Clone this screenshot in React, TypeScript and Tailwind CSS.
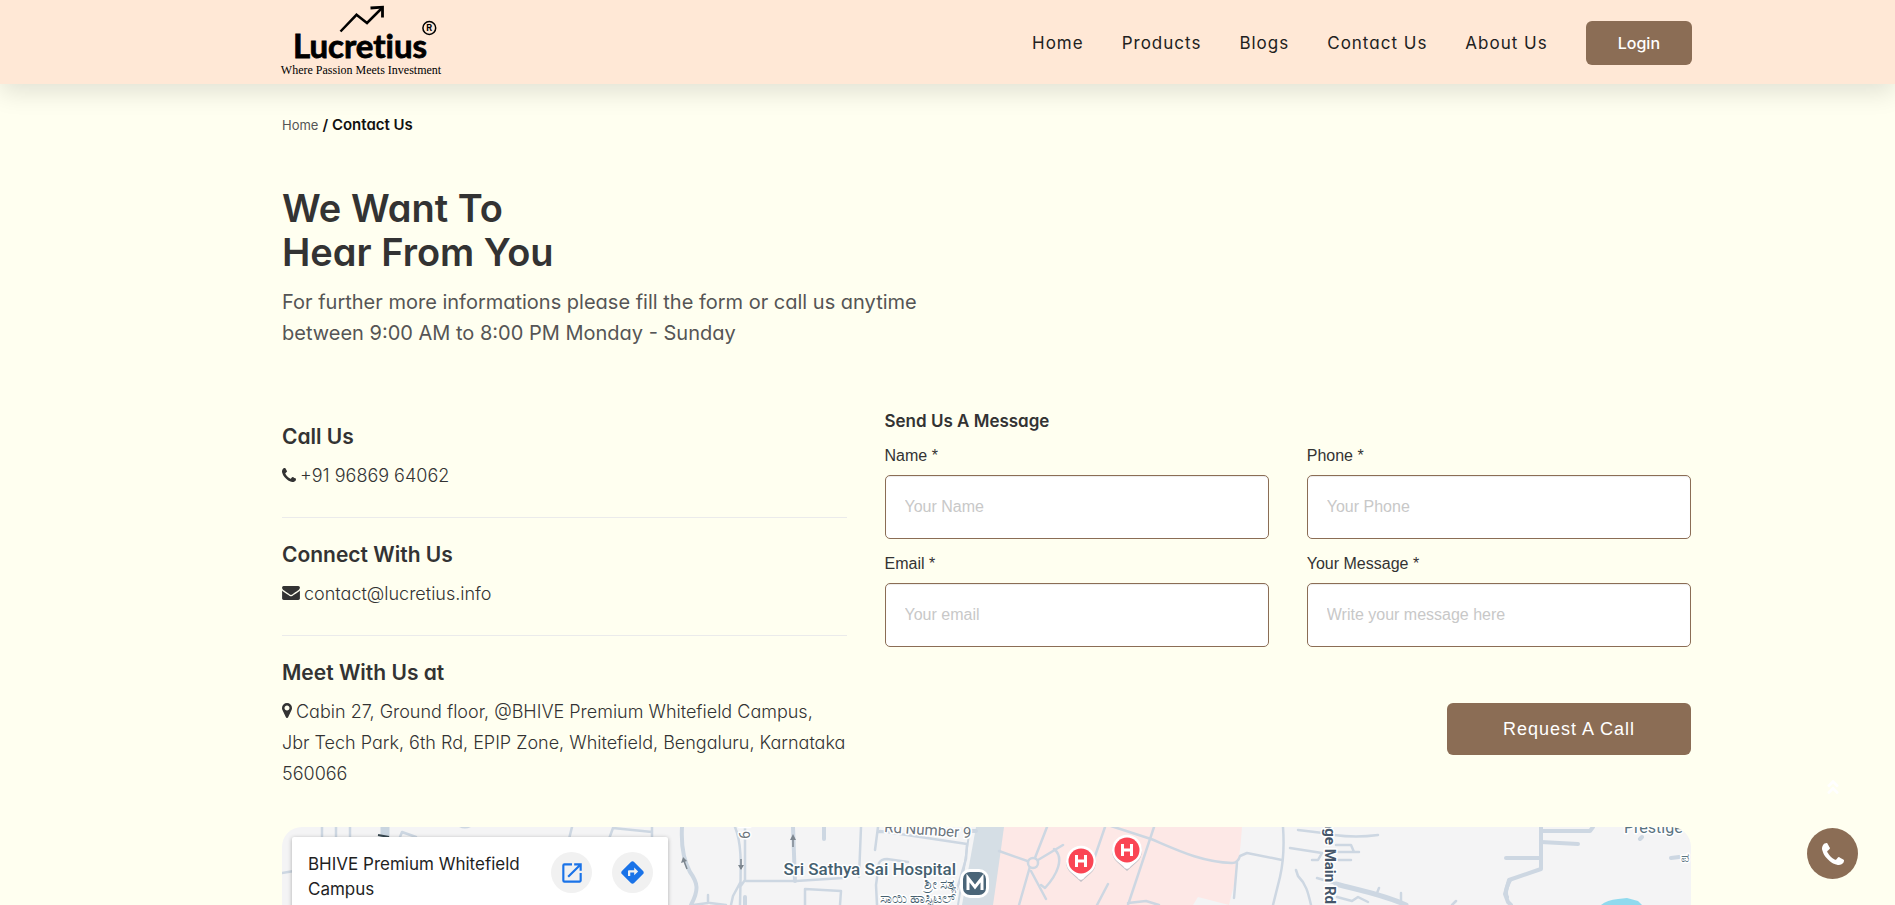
import { useState } from "react";
import { FaAngleDoubleUp } from "react-icons/fa";
import { MdDirections, MdOpenInNew } from "react-icons/md";

const navLinks = ["Home", "Products", "Blogs", "Contact Us", "About Us"];

const fields = [
    { name: "name", label: "Name *", placeholder: "Your Name", type: "text" },
    { name: "phone", label: "Phone *", placeholder: "Your Phone", type: "tel" },
    { name: "email", label: "Email *", placeholder: "Your email", type: "email" },
    { name: "message", label: "Your Message *", placeholder: "Write your message here", type: "text" },
];

function PhoneIcon({ className }: { className?: string }) {
    return (
        <svg viewBox="0 0 1408 1408" fill="currentColor" className={className} aria-hidden="true">
            <path d="M1408 1112q0 27-10 70.5t-21 68.5q-21 50-122 106-94 51-186 51-27 0-53-3.5t-57.5-12.5-47-14.5-55.5-20.5-49-18q-98-35-175-83-127-79-264-216t-216-264q-48-77-83-175-3-9-18-49t-20.5-55.5-14.5-47-12.5-57.5-3.5-53q0-92 51-186 56-101 106-122 25-11 68.5-21t70.5-10q14 0 21 3 18 6 53 76 11 19 30 54t35 63.5 31 53.5q3 4 17.5 25t21.5 35.5 7 28.5q0 20-28.5 50t-62 55-62 53-28.5 46q0 9 5 22.5t8.5 20.5 14 24 11.5 19q76 137 174 235t235 174q2 1 19 11.5t24 14 20.5 8.5 22.5 5q18 0 46-28.5t53-62 55-62 50-28.5q14 0 28.5 7t35.5 21.5 25 17.5q25 15 53.5 31t63.5 35 54 30q70 35 76 53 3 7 3 21z" />
        </svg>
    );
}

function EnvelopeIcon({ className }: { className?: string }) {
    return (
        <svg viewBox="0 256 1792 1408" fill="currentColor" className={className} aria-hidden="true">
            <path d="M1792 710v794q0 66-47 113t-113 47h-1472q-66 0-113-47t-47-113v-794q44 49 101 87 362 246 497 345 57 42 92.5 65.5t94.5 48 110 24.5h2q51 0 110-24.5t94.5-48 92.5-65.5q170-123 498-345 57-39 100-87zm0-294q0 79-49 151t-122 123q-376 261-468 325-10 7-42.5 31t-54 38.5-52 32.5-57.5 27-50 9h-2q-23 0-50-9t-57.5-27-52-32.5-54-38.5-42.5-31q-91-64-262-182.5t-205-142.5q-62-42-117-115.5t-55-136.5q0-78 41.5-130t118.5-52h1472q65 0 112.5 47t47.5 113z" />
        </svg>
    );
}

function MarkerIcon({ className }: { className?: string }) {
    return (
        <svg viewBox="0 128 1024 1536" fill="currentColor" className={className} aria-hidden="true">
            <path d="M768 640q0-106-75-181t-181-75-181 75-75 181 75 181 181 75 181-75 75-181zm256 0q0 109-33 179l-364 774q-16 33-47.5 52t-67.5 19-67.5-19-46.5-52l-365-774q-33-70-33-179 0-212 150-362t362-150 362 150 150 362z" />
        </svg>
    );
}

function Logo() {
    return (
        <svg viewBox="-2 3 164 80" className="-ml-0.5 h-20 w-41" role="img" aria-label="Lucretius">
            <g fill="none" stroke="#000">
                <path d="M59.5 31.500 L75.500 14.800 L86 23 L101 8" strokeWidth="2.500" />
                <path d="M89.500 8 L101.500 7.200 L101.500 17.500" strokeWidth="2.800" />
                <circle cx="148.300" cy="28" r="6.400" strokeWidth="1.500" />
            </g>
            <text x="148.300" y="31.200" textAnchor="middle" className="font-['Inter'] text-[9px] font-bold">R</text>
            <text x="79" y="58" textAnchor="middle" stroke="#000" strokeWidth="0.800" className="font-['Lato'] text-[33px] font-bold [font-variant-ligatures:none]">Lucretius</text>
            <text x="80" y="74" textAnchor="middle" className="font-['Liberation_Serif'] text-[12px]">Where Passion Meets Investment</text>
        </svg>
    );
}

function HospitalPin({ x, y }: { x: number; y: number }) {
    return (
        <g transform={`translate(${x} ${y})`}>
            <path d="M0 20 L-10 11 A15 15 0 1 1 10 11 Z" fill="#8e9bab" opacity="0.5" transform="translate(0 1)" />
            <path d="M0 19 Q-2 19 -4 16 L-10 11 A15 15 0 1 1 10 11 L4 16 Q2 19 0 19 Z" fill="#fff" />
            <circle r="12.500" fill="#fa4554" />
            <path d="M-4.500 -6 V6 M4.500 -6 V6 M-4.500 0 H4.500" stroke="#fff" strokeWidth="3" />
        </g>
    );
}

function MapArt() {
    return (
        <svg
            viewBox="0 0 1410 78"
            preserveAspectRatio="xMinYMin slice"
            className="absolute inset-0 h-full w-full"
            role="img"
            aria-label="Map of Whitefield"
        >
            <rect width="1410" height="78" fill="#f4f4f5" />
            <path d="M720 0 H960 Q958 38 947 78 L916 70 L911 78 H709 Z" fill="#fde8e6" />
            <path d="M694 0 H722 Q718 30 711 78 H680 Z" fill="#d5dee5" />
            <path d="M688 0 Q684 30 676 78" stroke="#cbd6e0" strokeWidth="2" fill="none" />
            <path d="M1319 78 Q1325 73 1336 72 L1345 71 L1356 74 L1360 78 Z" fill="#90daee" />

            <g fill="none" stroke="#cdd7e2" strokeWidth="2.500" strokeLinecap="round" strokeLinejoin="round">
                {/* west side, mostly behind the place card */}
                <path d="M40 0 V10 M54 0 V10 M68 0 V10 M0 46 L12 44 M118 10 L120 5 L134 10 M290 0 L287 12 M370 0 V12 M370 5 L331 1 L327 12" />
                <path d="M103 0 V10" stroke="#c9d5e0" strokeWidth="9" strokeLinecap="butt" />
                <path d="M175 -3 Q182 3 190 -2" />
                <path d="M400 0 C399 18 402 34 408 45 C416 56 417 63 409 78" strokeWidth="4" />
                <path d="M453 0 C460 17 459 36 458 78 M463 0 L463 53 L458 60" />
                <path d="M464 54 L514 54 L561 51 M458 56 L451 69 L449 78 M426 68 V76 L411 78 M428 76 L444 78" />
                <path d="M511 0 L513 54 M542 0 V12" strokeWidth="4" />
                <path d="M579 0 L577 50 M596 0 L593 23 M598 4 L685 17 L684 32 L675 62 M597 5 H610" />
                <path d="M595 78 L594 58 L597 36 Q599 32 605 32 L626 35 M523 78 V62 L559 64 L558 78" />
                <path d="M463 70 V78 M682 4 H694" strokeWidth="4" />
                {/* hospital grounds */}
                <path d="M717 24 L751 36 L765 0 M751 36 L781 18 M749 36 L737 78 M749 44 L764 72" />
                <circle cx="751" cy="36" r="5" fill="#fde8e6" />
                <path d="M772 22 C783 31 775 48 763 61 L759 58 M823 0 L812 32 M872 0 L846 78 M826 57 L815 78 M846 76 L864 74 L877 78" />
                <path d="M829 -1 L869 12 C895 23 919 35 950 36 Q956 36 958 29 L965 26 L1000 33 M955 36 L952 71" />
                {/* main road side streets */}
                <path d="M1001 0 Q1003 28 998 50 L991 78 M1014 43 L1016 49 C1024 57 1026 65 1029 78" />
                <path d="M1016 3 L1041 6 M1008 21 L1040 26 L1036 33 H1030 M1052 8 Q1074 11 1096 8 M1054 18 H1069 L1072 25 H1077 M1053 25 H1072 M1055 33 H1069" />
                <path d="M1035 51 L1055 57 M1055 70 L1070 74 L1076 70 L1086 75 M1095 66 L1097 61 M1119 75 V66 M1170 78 L1174 74" />
                <path d="M1054 57 C1080 64 1100 67 1124 78" strokeWidth="5" />
                {/* Prestige lanes */}
                <path d="M1259 0 V42 L1227 53 L1223 67 L1226 75 L1229 78 M1224 31 H1259" strokeWidth="4" />
                <path d="M1259 4 L1308 4 L1311 0 M1259 15 L1296 17 M1360 10 L1358 12 M1389 31 L1397 30 M1228 53 Q1222 65 1225 70" strokeWidth="4" />
            </g>

            <g stroke="#7d868f" strokeWidth="1.500" fill="#7d868f">
                <path d="M402 34 L405 42 M511 20 V9 M459 32 V42" />
                <path d="M399 36 L401 30 L405 34 Z M508 13 L511 7 L514 13 Z M456 38 L459 43 L462 38 Z" stroke="none" />
            </g>
            <path d="M96 8 L107 10" stroke="#37474f" strokeWidth="2" />

            <g className="font-['Roboto']" stroke="#fff" strokeWidth="3" paintOrder="stroke" strokeLinejoin="round">
                <text x="602" y="5" transform="rotate(4 602 5)" fill="#6b747c" className="text-[15px]">Rd Number 9</text>
                <text x="457" y="-16" transform="rotate(90 457 -16)" fill="#6b747c" className="text-[14px]">Rd 9</text>
                <text x="674" y="48" textAnchor="end" fill="#45606f" className="text-[17px] font-medium">Sri Sathya Sai Hospital</text>
                <text x="674" y="62" textAnchor="end" fill="#45606f" className="text-[14px]">ಶ್ರೀ ಸತ್ಯ</text>
                <text x="674" y="76" textAnchor="end" fill="#45606f" className="text-[14px]">ಸಾಯಿ ಹಾಸ್ಪಿಟಲ್</text>
                <text x="1043" y="77" textAnchor="end" transform="rotate(90 1043 77)" fill="#45566a" className="text-[15px] font-bold">Graphite Village Main Rd</text>
                <text x="1342" y="6" fill="#5a7482" className="text-[16px]">Prestige</text>
                <text x="1399" y="35" fill="#5a7482" className="text-[13px]">ಪ</text>
            </g>

            <rect x="678" y="42" width="29" height="29" rx="10" fill="#fff" />
            <rect x="681" y="45" width="23" height="23" rx="7" fill="#4a6578" />
            <path d="M686 63 V51 L693 60 L700 51 V63" fill="none" stroke="#fff" strokeWidth="3" />
            <HospitalPin x={799} y={34} />
            <HospitalPin x={845} y={23} />
        </svg>
    );
}

export default function ContactPage() {
    const [values, setValues] = useState<Record<string, string>>({});

    return (
        <div className="flex min-h-screen flex-col bg-[#fffff0] font-['Inter',sans-serif] text-[#333] [font-feature-settings:'cv11']">
            <header className="relative z-10 flex h-21 items-center justify-between bg-[#ffe8d6] pt-0.5 pr-[203px] pl-[281px] shadow-[0_8px_24px_rgba(0,0,0,0.12)]">
                <a href="#home">
                    <Logo />
                </a>
                <nav className="flex items-center gap-[38px]">
                    {navLinks.map(link => (
                        <a key={link} href="#" className="pt-0.5 text-[17px] tracking-[1px] text-[#212121]">{link}</a>
                    ))}
                    <button className="h-11 rounded-md bg-[#8b6d55] px-8 text-base font-medium text-white">Login</button>
                </nav>
            </header>

            <main className="flex flex-1 flex-col pr-[204px] pl-[282px]">
                <div className="mt-[31px] flex items-center gap-1 text-[15px] leading-5 text-[#111]">
                    <a href="#home" className="text-[13px] text-[#555]">Home</a>
                    <span className="font-semibold">/ Contact Us</span>
                </div>

                <h1 className="mt-[51px] text-[38px] leading-11 font-semibold">
                    We Want To
                    <br />
                    Hear From You
                </h1>
                <p className="mt-[13px] text-xl leading-[31px] text-[#555]">
                    For further more informations please fill the form or call us anytime
                    <br />
                    between 9:00 AM to 8:00 PM Monday - Sunday
                </p>

                <div className="mt-[51px] grid grid-cols-[7fr_10fr] gap-[38px]">
                    <div>
                        <section className="border-b border-[#ebebeb] pt-5 pb-[26px]">
                            <h2 className="text-[21px] leading-[34px] font-semibold">Call Us</h2>
                            <p className="mt-1.5 text-lg leading-[31px] font-light">
                                <PhoneIcon className="mr-1 inline h-[14px] w-[14px] align-baseline" />
                                +91 96869 64062
                            </p>
                        </section>
                        <section className="border-b border-[#ebebeb] pt-5 pb-[26px]">
                            <h2 className="text-[21px] leading-[34px] font-semibold">Connect With Us</h2>
                            <p className="mt-1.5 text-lg leading-[31px] font-light">
                                <EnvelopeIcon className="mr-1 inline h-[14px] w-[18px] align-baseline" />
                                contact@lucretius.info
                            </p>
                        </section>
                        <section className="pt-5">
                            <h2 className="text-[21px] leading-[34px] font-semibold">Meet With Us at</h2>
                            <p className="mt-1.5 text-lg leading-[31px] font-light">
                                <MarkerIcon className="mr-1 inline h-[15px] w-[10px] align-baseline" />
                                Cabin 27, Ground floor, @BHIVE Premium Whitefield Campus,
                                <br />
                                Jbr Tech Park, 6th Rd, EPIP Zone, Whitefield, Bengaluru, Karnataka
                                <br />
                                560066
                            </p>
                        </section>
                    </div>

                    <form onSubmit={(e) => e.preventDefault()}>
                        <h3 className="mt-[7px] text-[17px] leading-7 font-semibold">Send Us A Message</h3>
                        <div className="mt-[10px] grid grid-cols-2 gap-x-[38px] gap-y-[14px] font-['Liberation_Sans',sans-serif]">
                            {fields.map(field => (
                                <div key={field.name} className="flex flex-col gap-2">
                                    <label htmlFor={field.name} className="text-base leading-[22px]">{field.label}</label>
                                    <input
                                        id={field.name}
                                        type={field.type}
                                        placeholder={field.placeholder}
                                        value={values[field.name] ?? ""}
                                        onChange={(e) => setValues({ ...values, [field.name]: e.target.value })}
                                        className="h-16 w-full rounded-[5px] border border-[#8b6d55] bg-white px-[19px] text-base shadow-[inset_0_1px_1px_rgba(0,0,0,0.075)] placeholder:text-[#c8c8c8]"
                                    />
                                </div>
                            ))}
                        </div>
                        <div className="mt-14 flex justify-end">
                            <button className="h-[52px] rounded-md bg-[#8b6d55] px-14 font-['Liberation_Sans',sans-serif] text-lg tracking-[1px] text-white">
                                Request A Call
                            </button>
                        </div>
                    </form>
                </div>

                <div className="relative mt-[38px] min-h-[78px] flex-1 overflow-hidden rounded-t-[20px]">
                    <MapArt />
                    <div className="absolute top-[10px] left-[10px] flex h-40 w-[376px] items-start justify-between rounded-xs bg-white py-[15px] pr-[15px] pl-4 shadow-[0_1px_4px_rgba(0,0,0,0.3)]">
                        <p className="text-[17px] leading-[25px] text-[#1f1f1f] [font-feature-settings:normal]">
                            BHIVE Premium Whitefield
                            <br />
                            Campus
                        </p>
                        <div className="flex gap-5">
                            <a href="#map" aria-label="Open in Maps" className="flex h-[41px] w-[41px] items-center justify-center rounded-full bg-[#f1f1f1] text-[#1a73e8]">
                                <MdOpenInNew size={26} />
                            </a>
                            <a href="#directions" aria-label="Directions" className="flex h-[41px] w-[41px] items-center justify-center rounded-full bg-[#f1f1f1] text-[#1a73e8]">
                                <MdDirections size={27} />
                            </a>
                        </div>
                    </div>
                </div>
            </main>

            <div className="fixed right-[37px] bottom-[26px] z-20 flex flex-col items-center gap-8">
                <a href="#top" aria-label="Back to top" className="text-white">
                    <FaAngleDoubleUp size={18} />
                </a>
                <a href="tel:+919686964062" aria-label="Call us" className="flex h-[51px] w-[51px] items-center justify-center rounded-full bg-[#8b6d55] text-white">
                    <PhoneIcon className="h-[22px] w-[22px]" />
                </a>
            </div>
        </div>
    );
}
